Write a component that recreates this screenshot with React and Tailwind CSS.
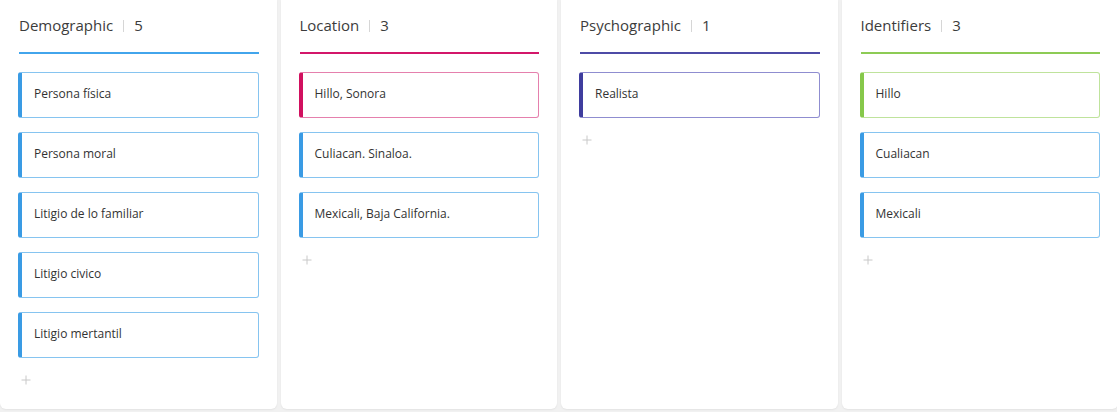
const columns = [
  {
    title: 'Demographic',
    line: 'bg-[#42a5ec]',
    items: [
      { label: 'Persona física', tone: 'blue' },
      { label: 'Persona moral', tone: 'blue' },
      { label: 'Litigio de lo familiar', tone: 'blue' },
      { label: 'Litigio civico', tone: 'blue' },
      { label: 'Litigio mertantil', tone: 'blue' },
    ],
  },
  {
    title: 'Location',
    line: 'bg-[#d3176a]',
    items: [
      { label: 'Hillo, Sonora', tone: 'pink' },
      { label: 'Culiacan. Sinaloa.', tone: 'blue' },
      { label: 'Mexicali, Baja California.', tone: 'blue' },
    ],
  },
  {
    title: 'Psychographic',
    line: 'bg-[#4d4ba6]',
    items: [{ label: 'Realista', tone: 'purple' }],
  },
  {
    title: 'Identifiers',
    line: 'bg-[#8dcb55]',
    items: [
      { label: 'Hillo', tone: 'green' },
      { label: 'Cualiacan', tone: 'blue' },
      { label: 'Mexicali', tone: 'blue' },
    ],
  },
]

// card colours: outline + thick left bar
const tones = {
  blue: 'border-[#86c4f0] border-l-[#3a9be4]',
  pink: 'border-[#e580ad] border-l-[#d1105f]',
  purple: 'border-[#8f8dd0] border-l-[#3f3d9e]',
  green: 'border-[#bfe39c] border-l-[#86c84a]',
}

const Card = ({ label, tone }) => (
  <div
    className={`h-[46px] flex items-center rounded-[3px] border border-l-4 bg-white pl-[12px] pb-[2px] text-[12px] text-[#333] ${tones[tone]}`}
  >
    {label}
  </div>
)

const AddButton = () => (
  <button className="mt-[16px] ml-[1px] w-[12px] h-[12px] flex items-center justify-center text-[#c8c8c8]">
    <svg width="10" height="10" viewBox="0 0 10 10" fill="none" stroke="currentColor" strokeWidth="1">
      <path d="M5 0.5v9M0.5 5h9" />
    </svg>
  </button>
)

const Column = ({ title, line, items }) => (
  <div className="bg-white rounded-b-[6px] shadow-[0_1px_2px_rgba(0,0,0,0.06)] px-[19px] pr-[18px] h-[409px]">
    <div className="flex items-center h-[52px] pb-[1px] text-[15px] text-[#3c3c3c]">
      <span>{title}</span>
      <span className="mx-[10px] w-px h-[12px] bg-[#d6d6d6]" />
      <span>{items.length}</span>
    </div>
    <div className={`h-[2px] ${line}`} />
    <div className="flex flex-col gap-[14px] mt-[18px] -ml-[1px]">
      {items.map((it) => (
        <Card key={it.label} {...it} />
      ))}
    </div>
    <AddButton />
  </div>
)

export default function App() {
  return (
    <div
      className="w-full h-[412px] overflow-hidden bg-[#f1f1f1]"
      style={{ fontFamily: '"Open Sans", "Noto Sans", sans-serif' }}
    >
      <div className="w-[1118px] grid grid-cols-4 gap-[4px]">
        {columns.map((c) => (
          <Column key={c.title} {...c} />
        ))}
      </div>
    </div>
  )
}
